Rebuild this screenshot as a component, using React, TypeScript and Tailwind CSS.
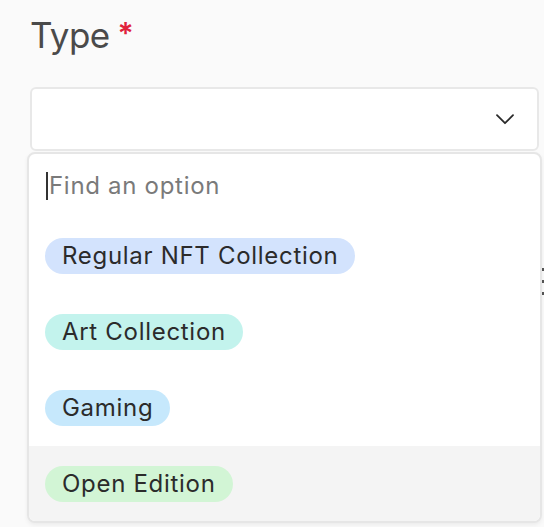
import React from "react";

type Option = { label: string; bg: string };

const options: Option[] = [
  { label: "Regular NFT Collection", bg: "bg-[#d3e3fd]" },
  { label: "Art Collection", bg: "bg-[#c3f3ed]" },
  { label: "Gaming", bg: "bg-[#c6e8fc]" },
  { label: "Open Edition", bg: "bg-[#d2f5d5]" },
];

function Chevron() {
  return (
    <svg width="18" height="11" viewBox="0 0 18 11" fill="none">
      <path d="M1 1.2 L9 9.2 L17 1.2" stroke="#2a2a2a" strokeWidth="1.8" strokeLinecap="round" strokeLinejoin="round" />
    </svg>
  );
}

export default function App() {
  return (
    <div
      className="relative w-[544px] h-[527px] overflow-hidden bg-[#fafafa]"
      style={{ fontFamily: "Inter, 'Noto Sans', sans-serif" }}
    >
      <div className="pl-[30px] pt-[13px]">
        <div className="flex items-start leading-[44px]">
          <span className="text-[35px] text-[#4a4a4a] tracking-[-0.6px]">Type</span>
          <span className="ml-[8px] text-[30px] leading-[40px] text-[#e0223c] font-semibold">*</span>
        </div>
        <div className="mt-[30px] w-[509px] h-[64px] rounded-[6px] border-[2.5px] border-[#e8e8e8] bg-white flex items-center justify-end pr-[23px]">
          <Chevron />
        </div>
      </div>

      {/* handle peeking out from behind the menu */}
      <div className="absolute left-[542px] top-[268px] flex flex-col gap-[9px]">
        <div className="w-[4px] h-[3px] bg-[#555]" />
        <div className="w-[4px] h-[3px] bg-[#555]" />
        <div className="w-[4px] h-[3px] bg-[#555]" />
      </div>

      {/* open options menu */}
      <div className="absolute left-[27px] top-[152px] w-[515px] rounded-[8px] border-[2.5px] border-[#e6e6e6] bg-white overflow-hidden shadow-[0_2px_4px_rgba(0,0,0,0.06)]">
        <div className="h-[64px] flex items-center pl-[17px]">
          <div className="w-[2px] h-[28px] bg-[#333] mr-[1px]" />
          <span className="text-[24px] text-[#7a7a7a] tracking-[0.7px]">Find an option</span>
        </div>
        {options.map((o, i) => (
          <div
            key={o.label}
            className={`flex items-center pl-[16px] ${i === 3 ? "h-[75px] bg-[#f4f4f4]" : "h-[76px]"}`}
          >
            <span className={`h-[36px] flex items-center rounded-full px-[17px] text-[24px] tracking-[0.7px] text-[#2b2b2b] ${o.bg}`}>
              {o.label}
            </span>
          </div>
        ))}
      </div>
    </div>
  );
}
